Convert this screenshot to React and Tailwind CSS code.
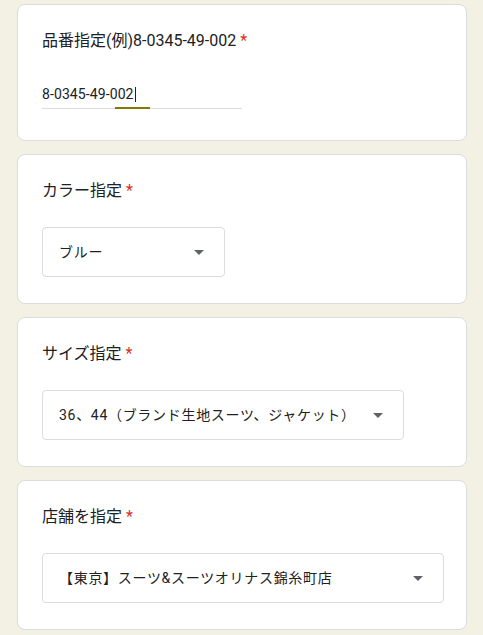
const font = { fontFamily: 'Roboto, "Noto Sans CJK JP", sans-serif' };

const Title = ({ children }) => (
  <div className="h-6 text-[16px] leading-6 tracking-[0px] text-[#202124]">
    {children}
    <span className="ml-[4px] text-[#d93025]">*</span>
  </div>
);

const Arrow = () => (
  <svg width="10" height="5" viewBox="0 0 10 5" className="shrink-0">
    <path d="M0 0 L10 0 L5 5 Z" fill="#5f6368" />
  </svg>
);

const SelectQuestion = ({ title, value, width }) => (
  <div className="rounded-lg border border-[#dadce0] bg-white px-6 pt-6 pb-[26px]">
    <Title>{title}</Title>
    <div
      className={`mt-6 flex h-[50px] items-center justify-between rounded border border-[#dadce0] pl-4 pr-5 ${width}`}
    >
      <span className="text-[14px] leading-5 tracking-[0.7px] text-[#202124] whitespace-nowrap">{value}</span>
      <Arrow />
    </div>
  </div>
);

export default function App() {
  return (
    <div className="min-h-[635px] bg-[#f3f1e4] pt-[4px] pb-[5px]" style={font}>
      <div className="ml-[17px] flex w-[450px] flex-col gap-[13px]">
        <div className="rounded-lg border border-[#dadce0] bg-white px-6 pt-6 pb-[31px]">
          <Title>品番指定(例)8-0345-49-002</Title>
          <div className="relative mt-[29px] h-[27px] w-[200px] border-b border-[#dadce0]">
            <div className="flex h-6 items-center text-[14px] tracking-[0.1px] text-[#202124]">
              8-0345-49-002
              <span className="ml-[1px] inline-block h-[15px] w-[1px] bg-[#202124]" />
            </div>
            <div className="absolute bottom-[-1px] left-[73px] h-[2px] w-[35px] bg-[#807b00]" />
          </div>
        </div>

        <SelectQuestion title="カラー指定" value="ブルー" width="w-[183px]" />
        <SelectQuestion
          title="サイズ指定"
          value="36、44（ブランド生地スーツ、ジャケット）"
          width="w-[362px]"
        />
        <SelectQuestion
          title="店舗を指定"
          value="【東京】スーツ&スーツオリナス錦糸町店"
          width="w-[402px]"
        />
      </div>
    </div>
  );
}
